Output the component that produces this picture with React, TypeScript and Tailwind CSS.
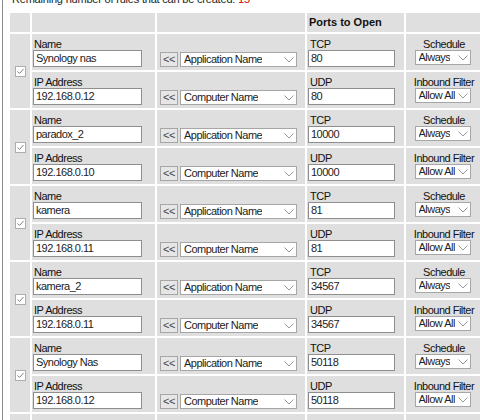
import React from "react";

const FONT = 'font-["Liberation_Sans",Arial,sans-serif]';

interface Rule {
  name: string;
  ip: string;
  tcp: string;
  udp: string;
}

const RULES: Rule[] = [
  { name: "Synology nas", ip: "192.168.0.12", tcp: "80", udp: "80" },
  { name: "paradox_2", ip: "192.168.0.10", tcp: "10000", udp: "10000" },
  { name: "kamera", ip: "192.168.0.11", tcp: "81", udp: "81" },
  { name: "kamera_2", ip: "192.168.0.11", tcp: "34567", udp: "34567" },
  { name: "Synology Nas", ip: "192.168.0.12", tcp: "50118", udp: "50118" },
];

function Chevron() {
  return (
    <svg width="10" height="6" viewBox="0 0 10 6" className="shrink-0">
      <polyline points="0.5,0.5 5,5 9.5,0.5" fill="none" stroke="#9a9a9a" strokeWidth="1" />
    </svg>
  );
}

function Select({ label, width }: { label: string; width: string }) {
  return (
    <div className={`${width} h-[15px] border border-[#a6a6a6] bg-white flex items-center justify-between gap-[3px] pl-[3px] pr-[2px] text-[#222] leading-[13px]`}>
      <span className="whitespace-nowrap overflow-hidden">{label}</span>
      <Chevron />
    </div>
  );
}

function TextBox({ value, width }: { value: string; width: string }) {
  return (
    <div className={`${width} h-[17px] border border-[#8e8e8e] bg-white pl-[2px] leading-[15px] text-[#222] whitespace-nowrap`}>
      {value}
    </div>
  );
}

function Checkbox() {
  return (
    <div className="w-[11px] h-[11px] border border-[#adadad] bg-white flex items-center justify-center">
      <svg width="9" height="9" viewBox="0 0 9 9">
        <polyline points="1.5,4.5 3.5,6.5 7.5,2" fill="none" stroke="#808080" strokeWidth="1" />
      </svg>
    </div>
  );
}

function AddButton() {
  return (
    <div className="w-[18px] h-[15px] shrink-0 border border-[#a6a6a6] bg-[#e6e6e6] flex items-center justify-center text-[#444] leading-[13px]">
      &lt;&lt;
    </div>
  );
}

function RuleRows({ rule }: { rule: Rule }) {
  const cell = "bg-[#dfdfdf]";
  return (
    <>
      <div className={`${cell} row-span-2 flex items-center justify-center`}>
        <Checkbox />
      </div>
      {/* first line: name / application / tcp / schedule */}
      <div className={`${cell} flex flex-col pt-[5px] pl-[1px]`}>
        <div className="h-[11px] leading-[11px] pl-[1px] text-[#111]">Name</div>
        <TextBox value={rule.name} width="w-[109px]" />
      </div>
      <div className={`${cell} flex items-start gap-[2px] pt-[18px] pl-[3px]`}>
        <AddButton />
        <Select label="Application Name" width="w-[117px]" />
      </div>
      <div className={`${cell} flex flex-col pt-[5px] pl-[1px]`}>
        <div className="h-[11px] leading-[11px] pl-[2px] text-[#111]">TCP</div>
        <TextBox value={rule.tcp} width="w-[87px]" />
      </div>
      <div className={`${cell} flex flex-col items-center pt-[5px]`}>
        <div className="h-[11px] leading-[11px] text-[#111] whitespace-nowrap">Schedule</div>
        <div className="pr-[3px]">
          <Select label="Always" width="w-[56px]" />
        </div>
      </div>
      {/* second line: ip / computer / udp / filter */}
      <div className={`${cell} flex flex-col pt-[5px] pl-[1px]`}>
        <div className="h-[11px] leading-[11px] pl-[1px] text-[#111]">IP Address</div>
        <TextBox value={rule.ip} width="w-[109px]" />
      </div>
      <div className={`${cell} flex items-start gap-[2px] pt-[18px] pl-[3px]`}>
        <AddButton />
        <Select label="Computer Name" width="w-[117px]" />
      </div>
      <div className={`${cell} flex flex-col pt-[5px] pl-[1px]`}>
        <div className="h-[11px] leading-[11px] pl-[2px] text-[#111]">UDP</div>
        <TextBox value={rule.udp} width="w-[87px]" />
      </div>
      <div className={`${cell} flex flex-col items-center pt-[5px]`}>
        <div className="h-[11px] leading-[11px] text-[#111] whitespace-nowrap">Inbound Filter</div>
        <div className="pr-[3px]">
          <Select label="Allow All" width="w-[56px]" />
        </div>
      </div>
    </>
  );
}

export default function App() {
  return (
    <div className={`w-[480px] h-[420px] overflow-hidden bg-white text-[11px] tracking-[-0.5px] ${FONT}`}>
      <div className="ml-[2px] h-full border-l border-[#8a8a8a] pl-[7px] flex flex-col">
        <p className="-mt-[8px] h-[21px] shrink-0 leading-[14px] pl-[2px] tracking-[-0.2px] text-[#222] whitespace-nowrap">
          Remaining number of rules that can be created: <span className="text-[#d00000]">15</span>
        </p>
        <div className="grid grid-cols-[20px_123px_148px_97px_76px] grid-rows-[19px] auto-rows-[36px] gap-[2px] shrink-0">
          <div className="bg-[#dfdfdf]" />
          <div className="bg-[#dfdfdf]" />
          <div className="bg-[#dfdfdf]" />
          <div className="bg-[#dfdfdf] pl-[2px] font-bold tracking-normal leading-[19px] text-[#111] whitespace-nowrap">Ports to Open</div>
          <div className="bg-[#dfdfdf]" />
          {RULES.map((r) => (
            <RuleRows key={r.name} rule={r} />
          ))}
          <RuleRows rule={{ name: "", ip: "", tcp: "", udp: "" }} />
        </div>
      </div>
    </div>
  );
}
